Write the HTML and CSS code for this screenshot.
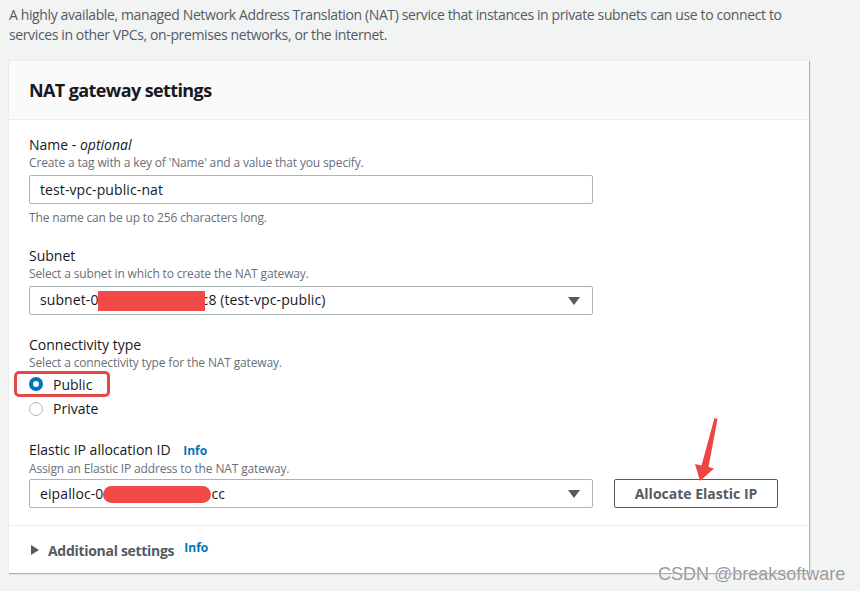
FILE: index.html
```html
<!DOCTYPE html>
<html lang="en">
<head>
    <meta charset="UTF-8">
    <meta name="viewport" content="width=device-width, initial-scale=1.0">
    <title>Create NAT gateway</title>
    <link rel="stylesheet" href="styles.css">
</head>
<body>
    <p class="intro">A highly available, managed Network Address Translation (NAT) service that instances in private subnets can use to connect to services in other VPCs, on-premises networks, or the internet.</p>

    <div class="card">
        <div class="card-header">
            <h2>NAT gateway settings</h2>
        </div>
        <div class="card-body">
            <div class="field">
                <label class="field-label" for="name">Name - <i>optional</i></label>
                <div class="field-desc">Create a tag with a key of 'Name' and a value that you specify.</div>
                <input class="control" type="text" id="name" value="test-vpc-public-nat">
                <div class="field-hint">The name can be up to 256 characters long.</div>
            </div>

            <div class="field">
                <div class="field-label">Subnet</div>
                <div class="field-desc">Select a subnet in which to create the NAT gateway.</div>
                <div class="control select">
                    <span>subnet-0<span class="redact"></span>c8 (test-vpc-public)</span>
                    <span class="caret"></span>
                </div>
            </div>

            <div class="field">
                <div class="field-label">Connectivity type</div>
                <div class="field-desc">Select a connectivity type for the NAT gateway.</div>
                <div class="radio-group">
                    <label class="radio-option marked"><span class="radio checked"></span>Public</label>
                    <label class="radio-option"><span class="radio"></span>Private</label>
                </div>
            </div>

            <div class="field">
                <div class="field-label">Elastic IP allocation ID <a class="info" href="#">Info</a></div>
                <div class="field-desc">Assign an Elastic IP address to the NAT gateway.</div>
                <div class="control-row">
                    <div class="control select">
                        <span>eipalloc-0<span class="redact pill"></span>cc</span>
                        <span class="caret"></span>
                    </div>
                    <button type="button" class="btn">Allocate Elastic IP</button>
                </div>
            </div>
        </div>
        <div class="card-footer">
            <span class="expander"></span>
            <span class="footer-title">Additional settings</span>
            <a class="info sup" href="#">Info</a>
        </div>
    </div>

    <svg class="arrow" width="40" height="80" viewBox="0 0 40 80">
        <path d="M31.5 2 L34.5 3 L25.5 51 L31 52.5 L17 65 L12 48 L18.5 49.5 Z" fill="#f04444"/>
    </svg>

    <div class="watermark">CSDN @breaksoftware</div>
</body>
</html>
```

FILE: styles.css
```css
body {
    margin: 0;
    background-color: #f2f3f3;
    font-family: "Open Sans", "Noto Sans", sans-serif;
    font-size: 14px;
    color: #16191f;
    position: relative;
    height: 591px;
    overflow: hidden;
}
.intro {
    margin: 0;
    padding: 5px 9px 0;
    max-width: 810px;
    line-height: 20px;
    color: #545b64;
    letter-spacing: -0.38px;
}
.card {
    margin: 15px 0 0 8px;
    width: 801px;
    background-color: #ffffff;
    border-top: 1px solid #eaeded;
    border-left: 1px solid #eaeded;
    box-shadow: 1px 1px 1px 0 rgba(0, 28, 36, 0.3);
    box-sizing: border-box;
}
.card-header {
    background-color: #fafafa;
    border-bottom: 1px solid #eaeded;
    height: 58px;
    padding: 0 20px;
    display: flex;
    align-items: center;
}
.card-header h2 {
    margin: 0;
    font-size: 18px;
    font-weight: 700;
    letter-spacing: -0.6px;
}
.card-body {
    padding: 15px 20px 17px;
    border-bottom: 1px solid #eaeded;
}
.field + .field {
    margin-top: 20px;
}
.field-label {
    display: block;
    line-height: 20px;
    letter-spacing: 0;
}
.field-desc,
.field-hint {
    font-size: 12px;
    line-height: 16px;
    color: #687078;
    letter-spacing: -0.15px;
}
.field-hint {
    margin-top: 6px;
}
.control {
    display: flex;
    align-items: center;
    width: 564px;
    height: 29px;
    margin-top: 4px;
    padding: 0 12px 0 10px;
    box-sizing: border-box;
    border: 1px solid #aab7b8;
    border-radius: 2px;
    background-color: #ffffff;
    font-family: inherit;
    font-size: 14px;
    color: #16191f;
    letter-spacing: 0.1px;
}
.select {
    justify-content: space-between;
}
.caret {
    width: 0;
    height: 0;
    border-left: 6px solid transparent;
    border-right: 6px solid transparent;
    border-top: 8px solid #545b64;
}
.redact {
    display: inline-block;
    position: relative;
    vertical-align: middle;
    width: 107px;
    height: 20px;
    margin: -2px -3px 0 -1px;
    background-color: #f24949;
}
.redact.pill {
    width: 108px;
    height: 17px;
    border-radius: 9px;
    margin: -2px 0 0 0;
}
.radio-group {
    display: flex;
    flex-direction: column;
}
.radio-option {
    display: flex;
    align-items: center;
    gap: 10px;
    height: 23px;
    letter-spacing: 0;
}
.radio-option.marked {
    box-sizing: border-box;
    height: 26px;
    width: 96px;
    margin-left: -15px;
    padding-left: 12px;
    border: 3px solid #e5484a;
    border-radius: 5px;
}
.radio {
    width: 14px;
    height: 14px;
    box-sizing: border-box;
    border: 1px solid #aab7b8;
    border-radius: 50%;
    background-color: #ffffff;
}
.radio.checked {
    border: 4.5px solid #0073bb;
}
.info {
    margin-left: 9px;
    color: #0073bb;
    font-size: 12px;
    font-weight: 700;
    text-decoration: none;
}
.control-row {
    display: flex;
    align-items: center;
    gap: 21px;
    margin-top: 2px;
}
.control-row .control {
    margin-top: 0;
}
.btn {
    width: 164px;
    height: 29px;
    border: 1px solid #545b64;
    border-radius: 2px;
    background-color: #ffffff;
    color: #545b64;
    font-family: inherit;
    font-size: 14px;
    font-weight: 700;
    letter-spacing: 0;
}
.card-footer {
    height: 47px;
    padding: 0 22px;
    display: flex;
    align-items: center;
    color: #545b64;
}
.expander {
    width: 0;
    height: 0;
    border-top: 5px solid transparent;
    border-bottom: 5px solid transparent;
    border-left: 8px solid #545b64;
    margin: 0 9px 0 0;
}
.footer-title {
    font-size: 14px;
    font-weight: 700;
    letter-spacing: -0.3px;
    margin-top: 1px;
}
.info.sup {
    margin-left: 10px;
    margin-top: -5px;
}
.arrow {
    position: absolute;
    left: 683px;
    top: 416px;
}
.watermark {
    position: absolute;
    left: 658px;
    top: 564px;
    font-family: "Liberation Sans", Arial, sans-serif;
    font-size: 18px;
    color: #9a9a9a;
    text-shadow: 0 0 1px #ffffff, 0 0 1px #ffffff;
}
```
